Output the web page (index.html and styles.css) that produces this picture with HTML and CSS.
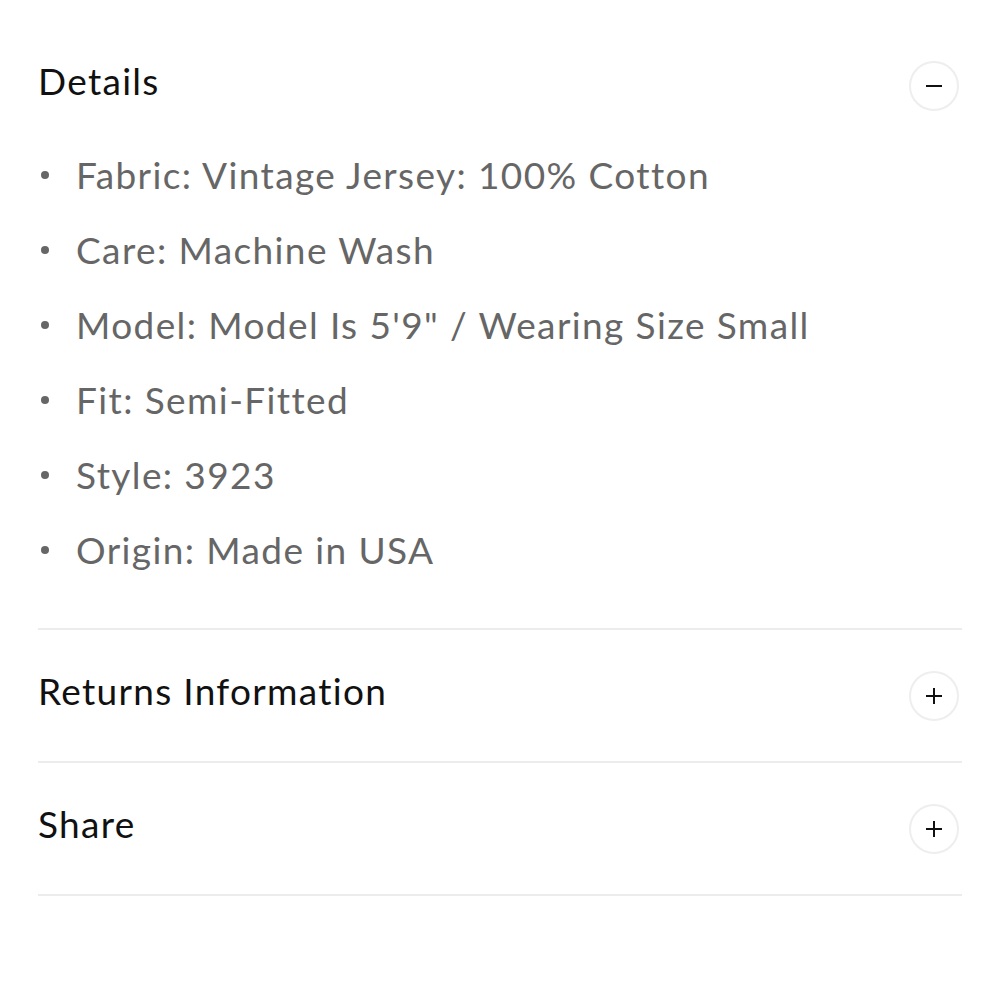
FILE: index.html
```html
<!DOCTYPE html>
<html lang="en">
<head>
  <meta charset="UTF-8">
  <meta name="viewport" content="width=device-width, initial-scale=1.0">
  <title>Product Details</title>
  <link rel="stylesheet" href="styles.css">
</head>
<body>
  <div class="accordion">
    <div class="section open">
      <div class="section-header">
        <h2>Details</h2>
        <span class="toggle">
          <svg width="20" height="20" viewBox="0 0 20 20"><path d="M2 10h16" stroke="#111" stroke-width="2"/></svg>
        </span>
      </div>
      <ul class="details-list">
        <li>Fabric: Vintage Jersey: 100% Cotton</li>
        <li>Care: Machine Wash</li>
        <li>Model: Model Is 5'9" / Wearing Size Small</li>
        <li>Fit: Semi-Fitted</li>
        <li>Style: 3923</li>
        <li>Origin: Made in USA</li>
      </ul>
    </div>
    <div class="section">
      <div class="section-header">
        <h2>Returns Information</h2>
        <span class="toggle">
          <svg width="20" height="20" viewBox="0 0 20 20"><path d="M2 10h16M10 2v16" stroke="#111" stroke-width="2"/></svg>
        </span>
      </div>
    </div>
    <div class="section">
      <div class="section-header">
        <h2>Share</h2>
        <span class="toggle">
          <svg width="20" height="20" viewBox="0 0 20 20"><path d="M2 10h16M10 2v16" stroke="#111" stroke-width="2"/></svg>
        </span>
      </div>
    </div>
  </div>
</body>
</html>
```

FILE: styles.css
```css
body {
  margin: 0;
  padding: 0 38px;
  font-family: Lato, "Noto Sans", sans-serif;
  background: #fff;
}
.section {
  border-bottom: 2px solid #ececec;
  padding: 41px 0 40px;
}
.section.open {
  padding: 61px 0 41px;
}
.section-header {
  display: flex;
  align-items: center;
  justify-content: space-between;
  height: 50px;
}
.section-header h2 {
  margin: 0 0 11px;
  font-size: 37px;
  font-weight: 400;
  letter-spacing: 1.3px;
  color: #111;
}
.toggle {
  width: 46px;
  height: 46px;
  margin-right: 3px;
  border: 2px solid #eee;
  border-radius: 50%;
  display: flex;
  align-items: center;
  justify-content: center;
}
.details-list {
  list-style: none;
  margin: 26px 0 0;
  padding: 0;
}
.details-list li {
  position: relative;
  padding-left: 38px;
  font-size: 37px;
  line-height: 75px;
  letter-spacing: 1.4px;
  color: #666;
}
.details-list li::before {
  content: "";
  position: absolute;
  left: 3px;
  top: 34px;
  width: 8px;
  height: 8px;
  border-radius: 50%;
  background: #666;
}
```
